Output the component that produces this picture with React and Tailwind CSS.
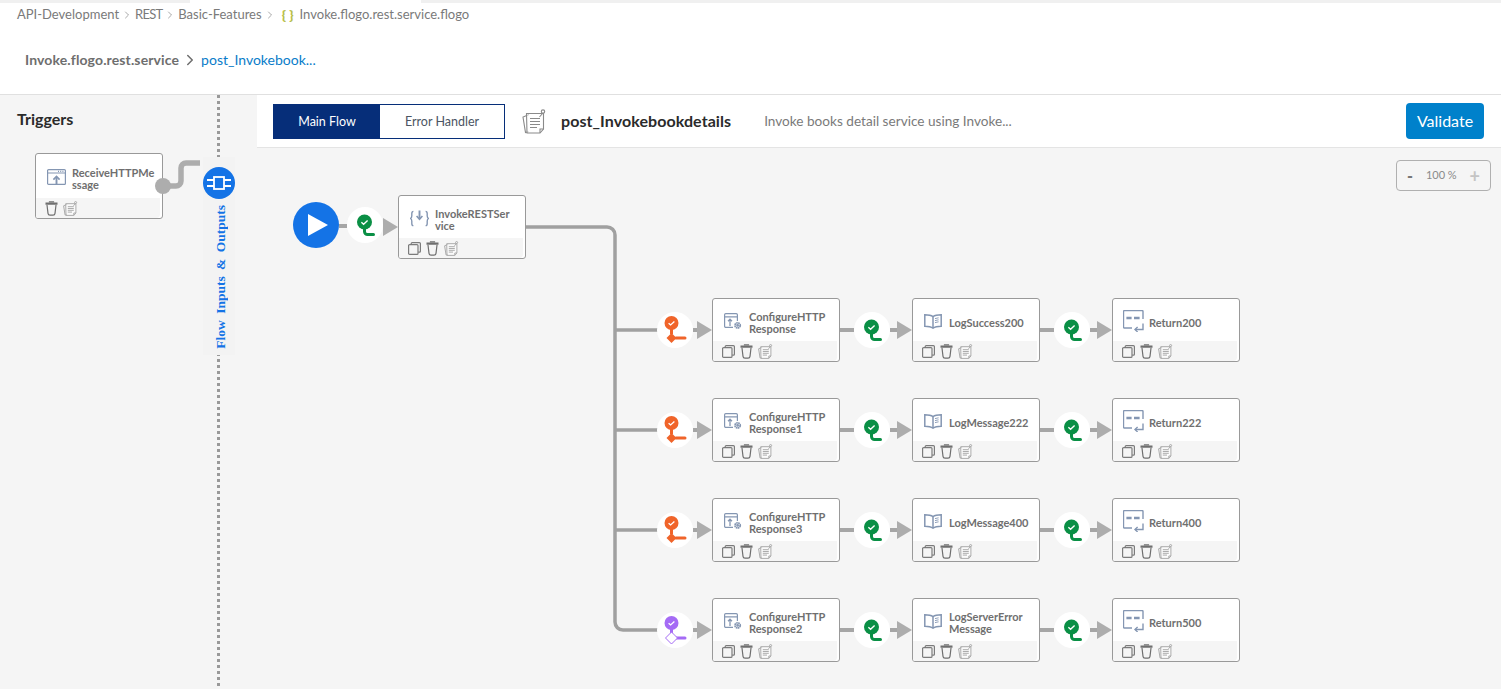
import { ChevronRight } from 'lucide-react';

const Slate = '#8496b2';

// Footer icons
const IconCopy = () => (
  <svg width="13" height="13" viewBox="0 0 13 13" fill="none" stroke="#7b7b7b" strokeWidth="1.2">
    <rect x="0.6" y="2.6" width="9.4" height="9.8" rx="1" />
    <path d="M3.2 2.4V1.6a1 1 0 0 1 1-1h7.2a1 1 0 0 1 1 1v7.6a1 1 0 0 1-1 1h-1.2" />
  </svg>
);
const IconTrash = () => (
  <svg width="13" height="15" viewBox="0 0 13 15" fill="none" stroke="#6f6f6f" strokeWidth="1.2">
    <path d="M0.5 2.6h12" strokeWidth="2.2" />
    <path d="M4.5 1.4V0.9h4v.5" />
    <path d="M2 4l1 8.4c.1 1 1 1.8 2 1.8h3c1 0 1.9-.8 2-1.8L11 4" />
  </svg>
);
const IconNotes = ({ size = 15, color = '#a8a8a8', strokeWidth = 1.6 }) => (
  <svg width={size} height={size} viewBox="0 0 25 25" fill="none" stroke={color} strokeWidth={strokeWidth}>
    <path d="M7 5.5L1 8l2.5 15.5 3-.8" />
    <path d="M4.5 4.5h17v15.5l-3.5 4H5z" fill="#fff" fillOpacity="0.5" />
    <path d="M8 9.5h10M8 12.5h10M8 15.5h10M8 18.5h7" />
    <path d="M21.5 20h-3.5v4" />
    <circle cx="21" cy="2.6" r="1.7" />
    <path d="M20.5 4.5l-3 3.5" />
  </svg>
);

// Activity icons
const IconReceive = () => (
  <svg width="19" height="16" viewBox="0 0 19 16" fill="none" stroke={Slate} strokeWidth="1.2">
    <rect x="0.6" y="0.6" width="17.8" height="14.8" rx="1" />
    <path d="M0.6 4h17.8" />
    <path d="M11 2.3h1M13.2 2.3h1M15.4 2.3h1" />
    <path d="M9.5 15V8" strokeWidth="1.9" />
    <path d="M6.4 10.6l3.1-3.2 3.1 3.2" strokeWidth="1.6" />
  </svg>
);
const IconInvoke = () => (
  <svg width="19" height="17" viewBox="0 0 19 17" fill="none" stroke={Slate} strokeWidth="1.4">
    <path d="M3.4 1.4c-1.6 0-1.6 1-1.6 2.2v2.2c0 1.4-.4 2.2-1.3 2.7.9.5 1.3 1.3 1.3 2.7v2.2c0 1.2 0 2.2 1.6 2.2" />
    <path d="M15.6 1.4c1.6 0 1.6 1 1.6 2.2v2.2c0 1.4.4 2.2 1.3 2.7-.9.5-1.3 1.3-1.3 2.7v2.2c0 1.2 0 2.2-1.6 2.2" />
    <path d="M9.5 0.5v8" strokeWidth="1.9" />
    <path d="M6.6 6l2.9 3.2L12.4 6" strokeWidth="1.6" />
  </svg>
);
const IconConfigure = () => (
  <svg width="18" height="17" viewBox="0 0 18 17" fill="none" stroke={Slate} strokeWidth="1.2">
    <path d="M9 14.4H1.8a1.2 1.2 0 0 1-1.2-1.2V1.8A1.2 1.2 0 0 1 1.8.6h10.4a1.2 1.2 0 0 1 1.2 1.2V8" />
    <path d="M.6 3.8h12.8" />
    <path d="M6 13V6.4M4 8.2l2-2 2 2" strokeWidth="1.3" />
    <circle cx="13.6" cy="12.4" r="2.6" strokeWidth="1.8" strokeDasharray="1.6 0.5" />
    <circle cx="13.6" cy="12.4" r="0.8" />
  </svg>
);
const IconLog = () => (
  <svg width="18" height="15" viewBox="0 0 18 15" fill="none" stroke={Slate} strokeWidth="1.5">
    <path d="M9 2.6C7 1.2 4 .8 .8 .8v11.4c3.2 0 6.2.4 8.2 1.9 2-1.5 5-1.9 8.2-1.9V.8C14 .8 11 1.2 9 2.6z" />
    <path d="M9 2.6v11.5" />
    <path d="M11 4.6l3.6-.8M11 6.6l3.6-.8M11 8.6l3.6-.8" strokeWidth="0.9" />
  </svg>
);
const IconReturn = () => (
  <svg width="21" height="22" viewBox="0 0 21 22" fill="none" stroke={Slate} strokeWidth="1.4">
    <path d="M9 18H1.5a1 1 0 0 1-1-1V1.5a1 1 0 0 1 1-1H19a1 1 0 0 1 1 1V9" />
    <path d="M3.4 8h5.2M11 8h5.6" strokeWidth="2.6" />
    <path d="M20 13.5V19.5H12" />
    <path d="M14.6 17L12 19.5l2.6 2.4" />
  </svg>
);

// Connector nodes
const StatusGreen = () => (
  <div className="flex h-9 w-9 shrink-0 items-center justify-center rounded-full bg-white">
    <svg width="36" height="36" viewBox="0 0 36 36" fill="none">
      <path d="M17.5 18v6.5a3 3 0 0 0 3 3h6" stroke="#0a8f45" strokeWidth="3" strokeLinecap="round" />
      <circle cx="17.5" cy="15" r="7.5" fill="#0a8f45" />
      <path d="M14.4 15.2l2.2 2 4-3.6" stroke="#fff" strokeWidth="1.4" />
    </svg>
  </div>
);
const StatusBranch = ({ color, hollow }) => (
  <div className="flex h-9 w-9 shrink-0 items-center justify-center rounded-full bg-white">
    <svg width="36" height="36" viewBox="0 0 36 36" fill="none">
      <path d="M14.5 14v8" stroke={color} strokeWidth="3" />
      <path d="M19 26h9" stroke={color} strokeWidth="3" strokeLinecap="round" />
      {hollow ? (
        <path d="M14.5 20l6 6-6 6-6-6z" fill="#fff" stroke={color} strokeWidth="1" />
      ) : (
        <path d="M14.5 21l5 5-5 5-5-5z" fill={color} />
      )}
      <circle cx="14.5" cy="11" r="7" fill={color} />
      <path d="M11.6 11.2l2 1.8 3.8-3.4" stroke="#fff" strokeWidth="1.3" />
    </svg>
  </div>
);
const Line = ({ className }) => <div className={`h-1 shrink-0 bg-[#a6a6a6] ${className}`} />;
const Arrow = () => (
  <div className="h-0 w-0 shrink-0 border-y-[9px] border-l-[15px] border-y-transparent border-l-[#adadad]" />
);

function Card({ name, Icon, trigger }) {
  return (
    <div className={`flex w-32 shrink-0 flex-col overflow-hidden rounded-[3px] border border-[#999] bg-white ${trigger ? 'h-[66px]' : 'h-16'}`}>
      <div className={`flex shrink-0 items-center pt-1.5 ${trigger ? 'h-[44px]' : 'h-[42px]'}`}>
        <div className="-mt-1 flex w-9 shrink-0 justify-center pl-1"><Icon /></div>
        <div className="w-[87px] text-[11px] leading-3 font-bold whitespace-pre-line text-[#6f6f6f]">{name}</div>
      </div>
      <div className="mr-0.5 flex flex-1 items-center gap-[5px] rounded-br-sm bg-[#f5f5f5] pl-[9px]">
        {!trigger && <IconCopy />}
        <IconTrash />
        <IconNotes />
      </div>
    </div>
  );
}

const rows = [
  { first: 'ConfigureHTTP\nResponse', second: 'LogSuccess200', third: 'Return200', color: '#f0642a' },
  { first: 'ConfigureHTTP\nResponse1', second: 'LogMessage222', third: 'Return222', color: '#f0642a' },
  { first: 'ConfigureHTTP\nResponse3', second: 'LogMessage400', third: 'Return400', color: '#f0642a' },
  { first: 'ConfigureHTTP\nResponse2', second: 'LogServerError\nMessage', third: 'Return500', color: '#a56bf5', hollow: true },
];

function FlowRow({ row }) {
  return (
    <div className="flex items-center">
      <StatusBranch color={row.color} hollow={row.hollow} />
      <Line className="w-1" />
      <Arrow />
      <Card name={row.first} Icon={IconConfigure} />
      <Line className="w-3.5" />
      <StatusGreen />
      <Line className="w-[7px]" />
      <Arrow />
      <Card name={row.second} Icon={IconLog} />
      <Line className="w-3.5" />
      <StatusGreen />
      <Line className="w-[7px]" />
      <Arrow />
      <Card name={row.third} Icon={IconReturn} />
    </div>
  );
}

function Chevron() {
  return <ChevronRight className="mx-0.5 h-3 w-3" strokeWidth={1.3} />;
}

function Header() {
  return (
    <header className="flex h-[95px] shrink-0 flex-col border-b border-[#e0e0e0] bg-white">
      <div className="flex h-[3px] shrink-0">
        <div className="w-[190px] bg-[#f0f0f0]" />
        <div className="ml-[231px] flex-1 bg-[#f0f0f0]" />
      </div>
      <div className="flex h-[23px] items-center pl-[17px] text-[13px] text-[#7a7a7a]">
        <span>API-Development</span>
        <Chevron />
        <span className="tracking-[-0.8px]">REST</span>
        <Chevron />
        <span>Basic-Features</span>
        <Chevron />
        <span className="mr-1.5 ml-1 text-sm font-black text-[#b8c04a]">{'{ }'}</span>
        <span>Invoke.flogo.rest.service.flogo</span>
      </div>
      <div className="mt-6 flex items-center pl-[25px] text-sm">
        <span className="font-bold tracking-[0.12px] text-[#6e6e6e]">Invoke.flogo.rest.service</span>
        <ChevronRight className="mx-0.5 h-[18px] w-[18px] text-[#6e6e6e]" strokeWidth={2} />
        <span className="text-[#0a7cc9]">post_Invokebook...</span>
      </div>
    </header>
  );
}

function TriggersPanel() {
  return (
    <aside className="flex w-[257px] shrink-0 bg-[#f5f5f5]">
      <div className="w-[203px] shrink-0">
        <h2 className="pt-4 pl-[17px] text-base leading-4 font-bold text-[#2b2b2b]">Triggers</h2>
        <div className="relative mt-[26px] ml-[35px] w-32">
          <Card name={'ReceiveHTTPMe\nssage'} Icon={IconReceive} trigger />
          <svg className="absolute top-0 left-[118px]" width="50" height="44" fill="none">
            <path d="M10 33h13a5 5 0 0 0 5-5V15a5 5 0 0 1 5-5h14" stroke="#adadad" strokeWidth="5.5" />
            <circle cx="10" cy="33" r="8" fill="#adadad" />
          </svg>
        </div>
      </div>
      <div className="relative w-8 shrink-0">
        <div className="absolute inset-y-0 left-[14px] w-[3px] bg-[repeating-linear-gradient(to_bottom,#999_0,#999_3px,transparent_3px,transparent_6px)]" />
        <div className="relative mt-[62px] flex h-[198px] flex-col items-center bg-[#f3f3f3]">
          <div className="mt-2.5 flex h-8 w-8 items-center justify-center rounded-full bg-[#1473e6]">
            <svg width="24" height="16" viewBox="0 0 24 16" fill="none" stroke="#fff" strokeWidth="1.8">
              <rect x="7" y="2" width="10" height="12" />
              <path d="M0 5h7M0 11h7M17 5h7M17 11h7" />
            </svg>
          </div>
          <span className="mt-1.5 ml-[3px] rotate-180 font-['Liberation_Serif',serif] text-[13.5px] leading-4 font-bold [word-spacing:3px] whitespace-nowrap text-[#1473e6] [writing-mode:vertical-rl]">
            Flow Inputs &amp; Outputs
          </span>
        </div>
      </div>
    </aside>
  );
}

function Toolbar() {
  return (
    <div className="flex h-[53px] shrink-0 items-center border-b border-[#e4e4e4] bg-white pr-[17px] pl-4">
      <div className="flex h-[35px] w-[232px] border border-[#062e79] text-[12.5px]">
        <div className="flex w-[106px] items-center justify-center bg-[#062e79] pt-0.5 text-white">Main Flow</div>
        <div className="flex flex-1 items-center justify-center pt-0.5 text-[#4b5563]">Error Handler</div>
      </div>
      <div className="ml-[17px]"><IconNotes size={25} color="#8a8a8a" strokeWidth={1.1} /></div>
      <span className="ml-[14px] text-base font-bold tracking-[0.07px] text-[#2b2b2b]">post_Invokebookdetails</span>
      <span className="ml-[33px] text-[13.6px] text-[#7a7a7a]">Invoke books detail service using Invoke...</span>
      <button className="ml-auto h-9 w-[78px] rounded-sm bg-[#0081cb] text-base text-white">Validate</button>
    </div>
  );
}

function Canvas() {
  return (
    <main className="relative flex-1 bg-[#f5f5f5] pt-[47px] pl-9">
      <svg className="absolute inset-0 h-full w-full" fill="none" stroke="#a0a0a0" strokeWidth="3.5">
        <path d="M269 79H350a8 8 0 0 1 8 8V474a8 8 0 0 0 8 8H405" />
        <path d="M358 182H405M358 282H405M358 382H405" />
      </svg>
      <div className="absolute top-3 right-2.5 flex h-[31px] w-[95px] items-center justify-between rounded border border-[#b0b0b0] px-2.5 text-[#8a8a8a]">
        <span className="text-base font-black text-[#777]">-</span>
        <span className="text-[11px]">100 %</span>
        <span className="text-lg leading-none font-bold text-[#c4c4c4]">+</span>
      </div>
      <div className="relative flex items-center">
        <div className="mb-1 flex h-[46px] w-[46px] shrink-0 items-center justify-center rounded-full bg-[#1473e6]">
          <svg width="22" height="24" viewBox="0 0 22 24" className="ml-1"><path d="M1 1l20 11L1 23z" fill="#fff" /></svg>
        </div>
        <Line className="mb-0.5 w-2" />
        <div className="mb-1"><StatusGreen /></div>
        <Arrow />
        <Card name={'InvokeRESTSer\nvice'} Icon={IconInvoke} />
      </div>
      <div className="relative mt-[39px] ml-[364px] flex flex-col gap-9">
        {rows.map((row) => <FlowRow key={row.third} row={row} />)}
      </div>
    </main>
  );
}

export default function App() {
  return (
    <div className="flex h-[689px] w-[1501px] flex-col overflow-hidden bg-white font-['Lato',sans-serif]">
      <Header />
      <div className="flex min-h-0 flex-1">
        <TriggersPanel />
        <div className="flex min-w-0 flex-1 flex-col">
          <Toolbar />
          <Canvas />
        </div>
      </div>
    </div>
  );
}
